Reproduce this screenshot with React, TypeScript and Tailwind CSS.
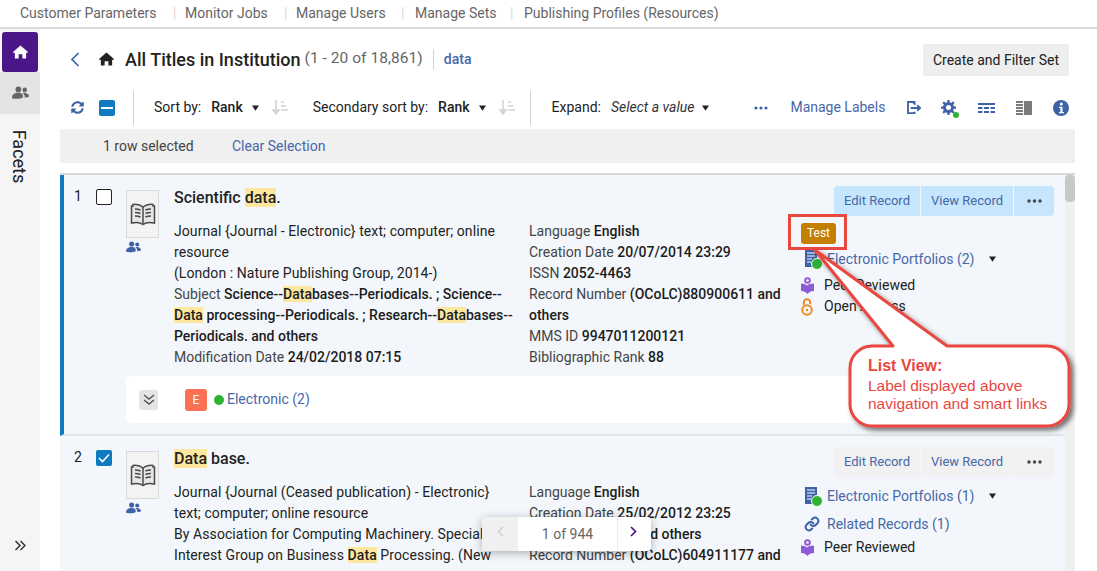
import React from "react";

const Caret = () => (
  <svg width="7" height="6" viewBox="0 0 8 6" className="inline-block"><path d="M0 0h8L4 6z" fill="#222" /></svg>
);

const SortIcon = () => (
  <svg width="16" height="17" viewBox="0 0 16 17"><path d="M4 1v12M1 11l3 4 3-4z" stroke="#d4d4d4" strokeWidth="1.6" fill="#d4d4d4" /><path d="M9 3h3M9 7h5M9 11h7" stroke="#d4d4d4" strokeWidth="1.5" /></svg>
);

const People = ({ color, w = 16 }: { color: string; w?: number }) => (
  <svg width={w} height={w * 0.8} viewBox="0 0 20 16" fill={color}>
    <circle cx="7.5" cy="4" r="3.4" /><circle cx="15" cy="4.6" r="2.7" />
    <path d="M0 14c0-4 3-6 7.5-6S13 10 13 13c0 1-2.500 2-6 2s-7-.3-7-1z" />
    <path d="M14 8c3 0 6 1.500 6 4 0 1-2 1.500-5 1.500 0-2-.5-4-2.500-5.300.4-.1 1-.2 1.500-.2z" />
  </svg>
);

const Book = () => (
  <svg width="26" height="24" viewBox="0 0 26 24" fill="none" stroke="#4a4a4a" strokeWidth="1.5">
    <path d="M13 5C10 2.500 6 2 3 2.500V4H1.500v17C6 20 10 20 13 22.500 16 20 20 20 24.500 21V4H23V2.500C20 2 16 2.500 13 5z" fill="#e6e6e6" />
    <path d="M13 5v17" />
    <path d="M5 7c2 0 4 .3 5.500 1M5 10.500c2 0 4 .3 5.500 1M5 14c2 0 4 .3 5.500 1M21 7c-2 0-4 .3-5.500 1M21 10.500c-2 0-4 .3-5.500 1M21 14c-2 0-4 .3-5.500 1" strokeWidth="1.700" />
  </svg>
);

const Hl = ({ children }: { children: React.ReactNode }) => (
  <span className="bg-[#fde79f] font-medium">{children}</span>
);

const B = ({ children }: { children: React.ReactNode }) => <span className="font-medium text-[#1c1c1c]">{children}</span>;

const PortfolioIcon = () => (
  <span className="relative inline-block w-[16px] h-[18px]">
    <svg width="14" height="17" viewBox="0 0 14 17">
      <path d="M1 0h12v13H9v4H1z" fill="#3f62a6" />
      <path d="M3 3h8M3 6h8M3 9h5M3 12h4" stroke="#fff" strokeWidth="1.2" />
    </svg>
    <span className="absolute right-[-3px] bottom-[-2px] w-[10px] h-[10px] rounded-full bg-[#2eb135] border border-white box-content" />
  </span>
);

const PeerIcon = () => (
  <svg width="13" height="17" viewBox="0 0 13 17" fill="#8e5bd6">
    <circle cx="6.500" cy="3.500" r="3.300" />
    <circle cx="6.500" cy="3.500" r="1.300" fill="#fff" />
    <path d="M0 6.500c2.500 0 5 .8 6 2 1-1.200 3.500-2 7-2V14c-3 0-5 1-6.500 3C5 15 3 14 0 14z" />
  </svg>
);

const OpenAccess = () => (
  <svg width="12" height="18" viewBox="0 0 12 18" fill="none" stroke="#f08a24" strokeWidth="2">
    <circle cx="6" cy="12" r="4.800" />
    <circle cx="6" cy="12" r="1.300" fill="#f08a24" stroke="none" />
    <path d="M2.800 7V4.500a3.200 3.200 0 0 1 6.400 0V6" />
  </svg>
);

const Actions = ({ active }: { active: boolean }) => {
  const bg = active ? "bg-[#c5e6fc]" : "bg-[#f1f1f1]";
  return (
    <div className="flex gap-[1px] -mt-[1px] text-[13px] text-[#4767a8]">
      <div className={`${bg} rounded-l w-[86px] h-[30px] flex items-center justify-center`}>Edit Record</div>
      <div className={`${bg} w-[92px] h-[30px] flex items-center justify-center`}>View Record</div>
      <div className={`${bg} rounded-r w-[40px] h-[30px] flex items-center justify-center text-[#444]`}>
        <svg width="15" height="4" viewBox="0 0 15 4" fill="#444"><circle cx="2" cy="2" r="1.700" /><circle cx="7.500" cy="2" r="1.700" /><circle cx="13" cy="2" r="1.700" /></svg>
      </div>
    </div>
  );
};

const Leading = ({ num, checked }: { num: string; checked: boolean }) => (
  <>
    <div className="w-[22px] pt-[12px] text-[14px] leading-[18px] text-[#222]">{num}</div>
    <div className="w-[30px] pt-[14px]">
      {checked ? (
        <div className="w-[16px] h-[16px] rounded-[2px] bg-[#0f7abf] flex items-center justify-center">
          <svg width="12" height="10" viewBox="0 0 12 10" fill="none" stroke="#fff" strokeWidth="1.600"><path d="M1 5l3.500 3.500L11 1.500" /></svg>
        </div>
      ) : (
        <div className="w-[16px] h-[16px] rounded-[2px] border border-[#222] bg-white" />
      )}
    </div>
    <div className="w-[48px] pt-[15px] shrink-0">
      <div className="w-[33px] h-[48px] border border-[#d9d9d9] bg-[#f3f3f3] flex items-center justify-center"><Book /></div>
      <div className="mt-[3px]"><People color="#3f62a6" w={15} /></div>
    </div>
  </>
);

export default function App() {
  return (
    <div className="w-[1097px] h-[571px] relative overflow-hidden bg-white text-[14px] text-[#222] flex flex-col font-['Roboto',sans-serif]">
      <nav className="h-[29px] shrink-0 border-b-2 border-[#dcdcdc] bg-white flex items-center pl-[20px] text-[14px] text-[#666]">
        <span className="w-[153px]">Customer Parameters</span>
        <span className="text-[#e6d6d0] w-[12px]">|</span>
        <span className="w-[99px]">Monitor Jobs</span>
        <span className="text-[#d8d8d8] w-[12px]">|</span>
        <span className="w-[105px]">Manage Users</span>
        <span className="text-[#d8d8d8] w-[14px]">|</span>
        <span className="w-[95px]">Manage Sets</span>
        <span className="text-[#d8d8d8] w-[14px]">|</span>
        <span>Publishing Profiles (Resources)</span>
      </nav>

      <div className="flex flex-1 min-h-0">
        <aside className="w-[40px] shrink-0 bg-[#f5f5f5] flex flex-col">
          <div className="ml-[2px] mt-[3px] w-[36px] h-[40px] rounded-[3px] bg-[#4b1788] flex items-center justify-center">
            <svg width="15" height="14" viewBox="0 0 16 14" fill="#fff"><path d="M8 0L0 7l1 1.200 1-.8V14h4V9.500h4V14h4V7.400l1 .8L16 7z" /></svg>
          </div>
          <div className="h-[42px] bg-[#e4e4e4] flex items-center justify-center"><People color="#666" w={17} /></div>
          <div className="h-[85px] flex items-center justify-center">
            <span className="rotate-90 text-[18px] text-[#222] whitespace-nowrap">Facets</span>
          </div>
          <div className="mt-auto mb-[20px] flex justify-center text-[#333]">
            <svg width="12" height="11" viewBox="0 0 12 11" fill="none" stroke="#333" strokeWidth="1.500"><path d="M1.500 1l4.500 4.500L1.500 10M6.500 1L11 5.500 6.500 10" /></svg>
          </div>
        </aside>

        <main className="flex-1 min-w-0 pl-[20px] pr-[22px] flex flex-col">
          <header className="h-[60px] shrink-0 flex items-center">
            <svg className="ml-[10px]" width="10" height="15" viewBox="0 0 10 15" fill="none" stroke="#3f62a6" strokeWidth="1.700"><path d="M8.500 1L2 7.500 8.500 14" /></svg>
            <svg className="ml-[19px]" width="15" height="14" viewBox="0 0 16 14" fill="#222"><path d="M8 0L0 7l1 1.200 1-.8V14h4V9.500h4V14h4V7.400l1 .8L16 7z" /></svg>
            <span className="ml-[11px] text-[18px] font-medium text-[#222]">All Titles in Institution</span>
            <span className="ml-[4px] text-[15.5px] tracking-[0.05px] text-[#666]">(1 - 20 of 18,861)</span>
            <span className="ml-[10px] h-[21px] border-l border-[#d4d4d4]" />
            <span className="ml-[10px] text-[14px] font-medium text-[#4767a8]">data</span>
            <button className="ml-auto mr-[6px] mt-[2px] w-[146px] h-[32px] rounded-[3px] bg-[#eeeeee] text-[14px] text-[#222]">Create and Filter Set</button>
          </header>

          <div className="h-[37px] shrink-0 flex items-center text-[#222]">
            <svg className="ml-[11px]" width="13" height="13" viewBox="0 0 512 512" fill="#3f62a6"><path d="M370.700 133.300C339.500 104 298.900 88 255.800 88c-77.500.1-144.300 53.200-162.800 126.900-1.300 5.400-6.100 9.200-11.700 9.200H24.100c-7.500 0-13.200-6.800-11.800-14.200C33.900 94.900 134.800 8 256 8c66.400 0 126.800 26.100 171.300 68.700L463 41C478.100 25.900 504 36.600 504 57.900V192c0 13.300-10.700 24-24 24H345.900c-21.400 0-32.100-25.900-17-41zM32 296h134.100c21.400 0 32.100 25.900 17 41l-41.800 41.800c31.300 29.300 71.800 45.300 114.900 45.200 77.400-.1 144.300-53.100 162.800-126.800 1.300-5.400 6.100-9.200 11.700-9.200h57.300c7.500 0 13.200 6.800 11.800 14.200C478.100 417.100 377.200 504 256 504c-66.400 0-126.800-26.100-171.300-68.700L49 471C33.900 486.100 8 475.400 8 454.100V320c0-13.300 10.700-24 24-24z" /></svg>
            <div className="ml-[15px] w-[16px] h-[16px] rounded-[2px] bg-[#0f7abf] flex items-center justify-center"><div className="w-[12px] h-[2px] bg-white" /></div>
            <div className="ml-[18px] h-[34px] border-l border-[#cfcfcf]" />
            <span className="ml-[20px]">Sort by:</span>
            <span className="ml-[10px] font-medium">Rank</span>
            <span className="ml-[9px] flex"><Caret /></span>
            <span className="ml-[13px] flex"><SortIcon /></span>
            <span className="ml-[25px]">Secondary sort by:</span>
            <span className="ml-[10px] font-medium">Rank</span>
            <span className="ml-[9px] flex"><Caret /></span>
            <span className="ml-[13px] flex"><SortIcon /></span>
            <div className="ml-[15px] h-[34px] border-l border-[#cfcfcf]" />
            <span className="ml-[21px]">Expand:</span>
            <span className="ml-[10px] italic text-[#333]">Select a value</span>
            <span className="ml-[8px] flex"><Caret /></span>
            <svg className="ml-[45px]" width="14" height="4" viewBox="0 0 14 4" fill="#3f62a6"><circle cx="2" cy="2" r="1.600" /><circle cx="7" cy="2" r="1.600" /><circle cx="12" cy="2" r="1.600" /></svg>
            <span className="ml-[22px] text-[#4767a8]">Manage Labels</span>
            <svg className="ml-[22px]" width="14" height="13" viewBox="0 0 15 14" fill="none" stroke="#3f62a6" strokeWidth="2"><path d="M8 2.500V1H1v12h7v-1.500" /><path d="M1 1h5l3 3" /><path d="M4 7.500h9M11 4.500l3 3-3 3" /></svg>
            <span className="ml-[20px] relative flex">
              <svg width="15" height="15" viewBox="0 0 16 16" fill="none" stroke="#3f62a6" strokeWidth="3.200"><circle cx="8" cy="8" r="4.300" /><path d="M8 0v3M8 13v3M0 8h3M13 8h3M2.300 2.300l2 2M11.700 11.700l2 2M2.300 13.700l2-2M11.700 4.300l2-2" strokeWidth="2.400" /></svg>
              <span className="absolute right-[-3px] bottom-[-3px] w-[6px] h-[6px] rounded-full bg-[#2eb135]" />
            </span>
            <svg className="ml-[22px]" width="17" height="10" viewBox="0 0 17 10" fill="#3f62a6"><rect width="17" height="2" /><rect y="4" width="4.500" height="2" /><rect x="6" y="4" width="5" height="2" /><rect x="12.500" y="4" width="4.500" height="2" /><rect y="8" width="4.500" height="2" /><rect x="6" y="8" width="5" height="2" /><rect x="12.500" y="8" width="4.500" height="2" /></svg>
            <svg className="ml-[21px]" width="16" height="14" viewBox="0 0 16 14" fill="#7a7a7a"><rect x="8" width="8" height="14" /><rect width="7" height="2" /><rect y="3" width="7" height="2" /><rect y="6" width="7" height="2" /><rect y="9" width="7" height="2" /><rect y="12" width="7" height="2" /></svg>
            <svg className="ml-[21px]" width="16" height="16" viewBox="0 0 16 16"><circle cx="8" cy="8" r="8" fill="#3f62a6" /><circle cx="8.300" cy="4" r="1.500" fill="#fff" /><path d="M6 6.700h3.500v5.300H11v1.300H6V12h1.400V8H6z" fill="#fff" /></svg>
          </div>

          <div className="h-[34px] mt-[3px] shrink-0 bg-[#f0f0f0] flex items-center pl-[43px]">
            <span className="w-[129px] text-[#444]">1 row selected</span>
            <span className="text-[#4767a8]">Clear Selection</span>
          </div>

          <div className="mt-[10px] flex-1 min-h-0 overflow-hidden flex border-t-2 border-[#d8d8d8]">
            <div className="flex-1 min-w-0">
              {/* Record 1 */}
              <section className="h-[261px] bg-[#f3f7fb] border-l-4 border-[#0f7abf] border-b-2 border-b-[#e2e5e8] pl-[10px] pr-[11px] flex">
                <Leading num="1" checked={false} />
                <div className="flex-1 min-w-0">
                  <div className="h-[46px] flex justify-between pt-[12px]">
                    <div className="text-[16px] leading-[22px] font-medium pt-0 text-[#222]">Scientific <Hl>data</Hl>.</div>
                    <Actions active />
                  </div>
                  <div className="flex leading-[21px] h-[155px]">
                    <div className="w-[355px]">
                      <span className="tracking-[0.08px]">Journal {"{"}Journal - Electronic{"}"} text; computer; online<br />resource<br />
                      (London : Nature Publishing Group, 2014-)</span><br />
                      <span className="text-[#444]">Subject</span> <B>Science--<Hl>Data</Hl>bases--Periodicals. ; Science--<br /><Hl>Data</Hl> processing--Periodicals. ; Research--<Hl>Data</Hl>bases--<br />Periodicals. and others</B><br />
                      <span className="text-[#444]">Modification Date</span> <B>24/02/2018 07:15</B>
                    </div>
                    <div className="w-[272px]">
                      <span className="text-[#444]">Language</span> <B>English</B><br />
                      <span className="text-[#444]">Creation Date</span> <B>20/07/2014 23:29</B><br />
                      <span className="text-[#444]">ISSN</span> <B>2052-4463</B><br />
                      <span className="text-[#444]">Record Number</span> <B>(OCoLC)880900611 and<br />others</B><br />
                      <span className="text-[#444]">MMS ID</span> <B>9947011200121</B><br />
                      <span className="text-[#444]">Bibliographic Rank</span> <B>88</B>
                    </div>
                    <div className="flex-1">
                      <div className="mt-[2px] w-[35px] h-[21px] rounded-[3px] bg-[#c47f00] text-white text-[12px] flex items-center justify-center">Test</div>
                      <div className="mt-[6px] ml-[3px] flex items-center h-[18px]">
                        <PortfolioIcon /><span className="ml-[7px] text-[#4767a8]">Electronic Portfolios (2)</span><span className="ml-[14px] flex"><Caret /></span>
                      </div>
                      <div className="mt-[7px] h-[21px] flex items-center"><PeerIcon /><span className="ml-[10px]">Peer Reviewed</span></div>
                      <div className="h-[21px] flex items-center"><OpenAccess /><span className="ml-[11px]">Open Access</span></div>
                    </div>
                  </div>
                  <div className="-ml-[48px] h-[47px] rounded-[5px] bg-white flex items-center pl-[13px]">
                    <div className="w-[19px] h-[20px] rounded-[3px] bg-[#e4e4e4] flex items-center justify-center">
                      <svg width="12" height="11" viewBox="0 0 12 11" fill="none" stroke="#555" strokeWidth="1.400"><path d="M1 1l5 4 5-4M1 6l5 4 5-4" /></svg>
                    </div>
                    <div className="ml-[27px] w-[22px] h-[22px] rounded-[3px] bg-[#fb7156] text-white text-[12px] flex items-center justify-center">E</div>
                    <span className="ml-[7px] w-[10px] h-[10px] rounded-full bg-[#2eb135]" />
                    <span className="ml-[3px] text-[#4767a8]">Electronic (2)</span>
                  </div>
                </div>
              </section>

              {/* Record 2 */}
              <section className="h-[200px] bg-[#f3f7fb] pl-[14px] pr-[11px] flex">
                <Leading num="2" checked />
                <div className="flex-1 min-w-0">
                  <div className="h-[46px] flex justify-between pt-[12px]">
                    <div className="text-[16px] leading-[22px] font-medium text-[#222]"><Hl>Data</Hl> base.</div>
                    <Actions active={false} />
                  </div>
                  <div className="flex leading-[21px]">
                    <div className="w-[355px] tracking-[0.08px]">
                      Journal {"{"}Journal (Ceased publication) - Electronic{"}"}<br />text; computer; online resource<br />
                      By Association for Computing Machinery. Special<br />
                      Interest Group on Business <Hl>Data</Hl> Processing. (New
                    </div>
                    <div className="w-[272px]">
                      <span className="text-[#444]">Language</span> <B>English</B><br />
                      <span className="text-[#444]">Creation Date</span> <B>25/02/2012 23:25</B><br />
                      <span className="text-[#444]">ISSN</span> <B>0095-0033 and others</B><br />
                      <span className="text-[#444]">Record Number</span> <B>(OCoLC)604911177 and</B>
                    </div>
                    <div className="flex-1">
                      <div className="mt-[5px] ml-[3px] flex items-center h-[18px]">
                        <PortfolioIcon /><span className="ml-[7px] text-[#4767a8]">Electronic Portfolios (1)</span><span className="ml-[14px] flex"><Caret /></span>
                      </div>
                      <div className="mt-[10px] ml-[3px] flex items-center h-[18px]">
                        <svg width="16" height="16" viewBox="0 0 24 24" fill="none" stroke="#3f62a6" strokeWidth="3" strokeLinecap="round"><path d="M10 13a5 5 0 0 0 7.500.5l3-3a5 5 0 0 0-7-7l-1.700 1.700" /><path d="M14 11a5 5 0 0 0-7.500-.5l-3 3a5 5 0 0 0 7 7l1.700-1.700" /></svg>
                        <span className="ml-[7px] text-[#4767a8]">Related Records (1)</span>
                      </div>
                      <div className="mt-[4px] h-[21px] flex items-center"><PeerIcon /><span className="ml-[10px]">Peer Reviewed</span></div>
                    </div>
                  </div>
                </div>
              </section>
            </div>
            <div className="w-[10px] shrink-0 bg-[#f0f0f0]">
              <div className="h-[27px] rounded-[4px] bg-[#c8c8c8]" />
            </div>
          </div>
        </main>
      </div>

      {/* Pagination overlay */}
      <div className="absolute left-[482px] top-[517px] w-[169px] h-[34px] rounded-[3px] bg-white shadow-[0_2px_10px_rgba(0,0,0,0.3)] flex items-center overflow-hidden">
        <div className="w-[36px] h-full bg-[#f0f0f0] flex items-center justify-center pb-[6px]">
          <svg width="7" height="11" viewBox="0 0 7 11" fill="none" stroke="#d0d0d0" strokeWidth="1.500"><path d="M6 1L1.500 5.500 6 10" /></svg>
        </div>
        <div className="w-[99px] text-center text-[#666]">1 of 944</div>
        <div className="flex-1 h-full border-l border-[#eeeeee] flex items-center justify-center pb-[6px] pr-[2px]">
          <svg width="7" height="11" viewBox="0 0 7 11" fill="none" stroke="#4b1788" strokeWidth="1.700"><path d="M1 1l4.500 4.500L1 10" /></svg>
        </div>
      </div>

      {/* Annotation callout */}
      <svg className="absolute left-0 top-0 pointer-events-none" width="1097" height="571" viewBox="0 0 1097 571" fill="none">
        <defs>
          <filter id="cs" x="-20%" y="-20%" width="140%" height="140%"><feDropShadow dx="3" dy="3" stdDeviation="2.500" floodColor="#000" floodOpacity="0.55" /></filter>
        </defs>
        <rect x="789.500" y="215.500" width="56" height="33" stroke="#e9473f" strokeWidth="3" />
        <path d="M815 250L893 346H872a22 22 0 0 0-22 22v36a22 22 0 0 0 22 22h175a22 22 0 0 0 22-22v-36a22 22 0 0 0-22-22H947z" fill="#fff" stroke="#e9473f" strokeWidth="3" strokeLinejoin="round" filter="url(#cs)" />
      </svg>
      <div className="absolute left-[868px] top-[357px] text-[15.5px] leading-[18px] text-[#e9473f] font-['Liberation_Sans',sans-serif]">
        <div className="font-bold text-[16px] mb-[2px]">List View:</div>
        <div>Label displayed above</div>
        <div>navigation and smart links</div>
      </div>
    </div>
  );
}
